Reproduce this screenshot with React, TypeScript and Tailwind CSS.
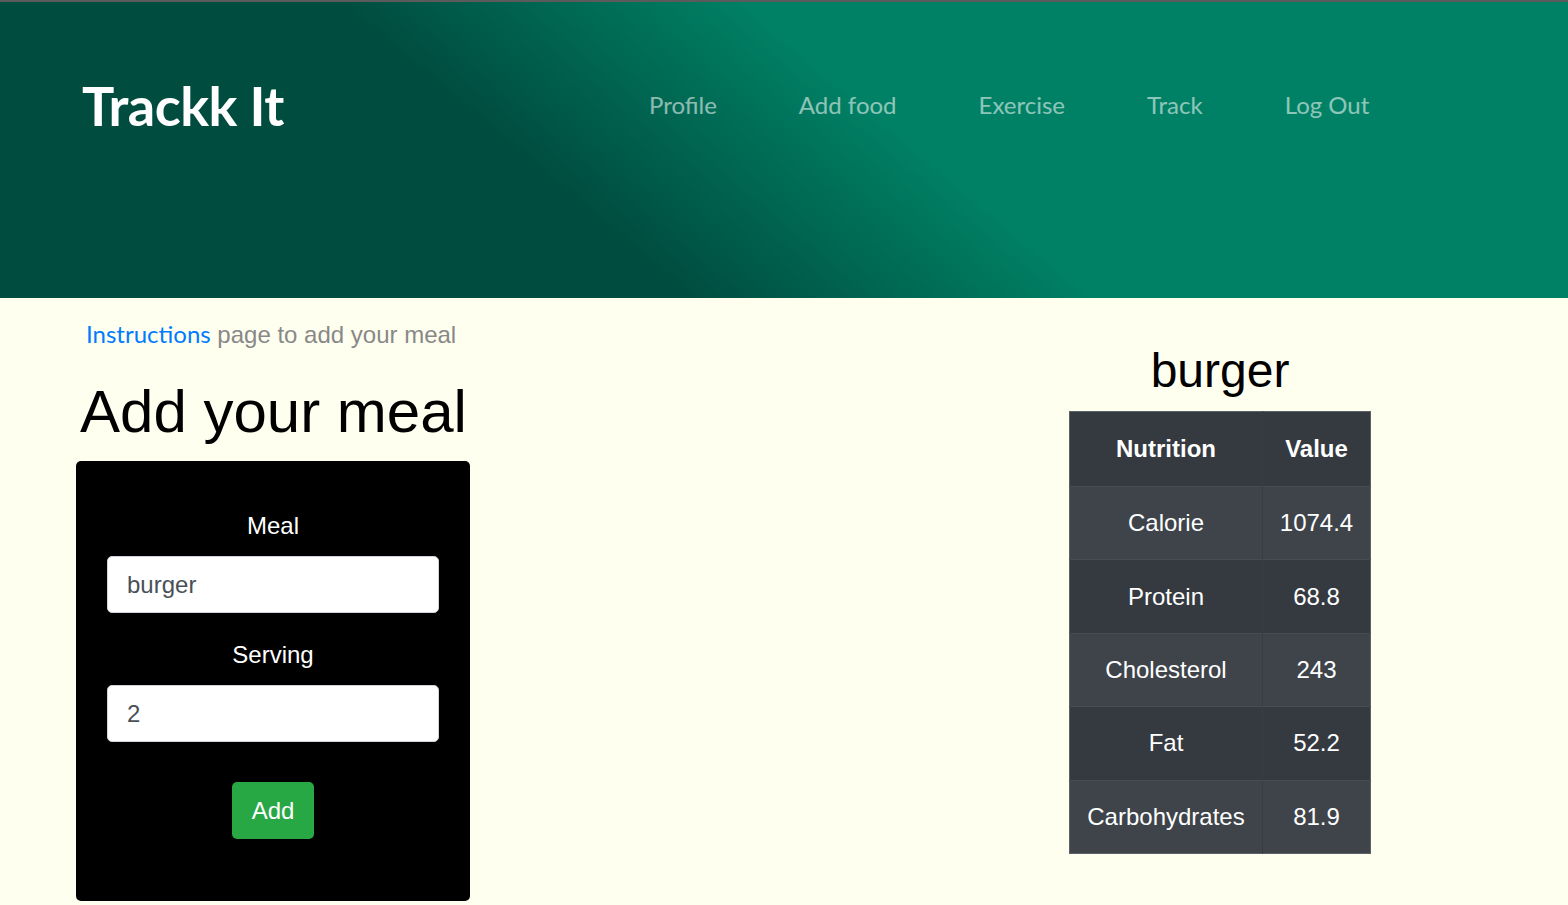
const navLinks = ["Profile", "Add food", "Exercise", "Track", "Log Out"];

const nutrition = [
  { name: "Calorie", value: "1074.4" },
  { name: "Protein", value: "68.8" },
  { name: "Cholesterol", value: "243" },
  { name: "Fat", value: "52.2" },
  { name: "Carbohydrates", value: "81.9" },
];

const Header = () => (
  <header className="h-[298px] border-t-2 border-[#5b5b5b] bg-[linear-gradient(40deg,#004d40_36%,#008064_57%)] font-['Lato',sans-serif]">
    <div className="mt-[72px] flex h-[64px] items-center">
      <a
        href="#"
        className="w-[649px] shrink-0 pl-[82px] text-[54px] font-bold leading-none tracking-[-0.5px] text-white"
      >
        Trackk It
      </a>
      <nav className="flex gap-[82px] pb-[2px]">
        {navLinks.map((l) => (
          <a key={l} href="#" className="text-[24px] text-white/55">
            {l}
          </a>
        ))}
      </nav>
    </div>
  </header>
);

const MealForm = () => (
  <form className="flex h-[440px] w-[394px] flex-col items-center rounded-[5px] bg-black px-[31px] pt-[47px] font-['Liberation_Sans',Arial,sans-serif]">
    <label className="text-[24px] leading-[36px] text-white">Meal</label>
    <input
      defaultValue="burger"
      className="mt-[12px] h-[57px] w-full rounded-[5px] border border-[#ced4da] bg-white px-[19px] text-[24px] text-[#495057] outline-none"
    />
    <label className="mt-[24px] text-[24px] leading-[36px] text-white">Serving</label>
    <input
      defaultValue="2"
      className="mt-[12px] h-[57px] w-full rounded-[5px] border border-[#ced4da] bg-white px-[19px] text-[24px] text-[#495057] outline-none"
    />
    <button
      type="button"
      className="mt-[40px] h-[57px] w-[82px] rounded-[5px] bg-[#28a745] text-[24px] text-white"
    >
      Add
    </button>
  </form>
);

const NutritionTable = () => (
  <table className="w-[302px] border-collapse border border-[#5c6268] font-['Liberation_Sans',Arial,sans-serif] text-[24px] text-white">
    <thead>
      <tr className="h-[75px] bg-[#343a40]">
        <th className="w-[193px] font-bold">Nutrition</th>
        <th className="border-l border-[#363c42] font-bold">Value</th>
      </tr>
    </thead>
    <tbody>
      {nutrition.map((n, i) => (
        <tr
          key={n.name}
          className={`h-[73.4px] border-t border-[#454d55] ${i % 2 === 0 ? "bg-[#3e444a]" : "bg-[#343a40]"}`}
        >
          <td className="text-center">{n.name}</td>
          <td className="border-l border-[#383e44] text-center">{n.value}</td>
        </tr>
      ))}
    </tbody>
  </table>
);

export default function App() {
  return (
    <div className="min-h-[905px] bg-[#fffff0]">
      <Header />
      <main className="flex">
        <section className="w-[470px] shrink-0 pl-[76px]">
          <p className="mt-[18px] pl-[10px] font-['Liberation_Sans',Arial,sans-serif] text-[24px] leading-[36px] text-[#888888]">
            <a href="#" className="font-['Lato',sans-serif] text-[#007bff]">
              Instructions
            </a>{" "}
            page to add your meal
          </p>
          <h1 className="mt-[23px] pl-[4px] font-['Liberation_Sans',Arial,sans-serif] text-[60px] leading-[72px] text-black">
            Add your meal
          </h1>
          <div className="mt-[13px]">
            <MealForm />
          </div>
        </section>
        <section className="ml-[599px] mt-[44px] w-[302px] shrink-0">
          <h2 className="text-center font-['Liberation_Sans',Arial,sans-serif] text-[48px] leading-[58px] text-black">
            burger
          </h2>
          <div className="mt-[11px]">
            <NutritionTable />
          </div>
        </section>
      </main>
    </div>
  );
}
